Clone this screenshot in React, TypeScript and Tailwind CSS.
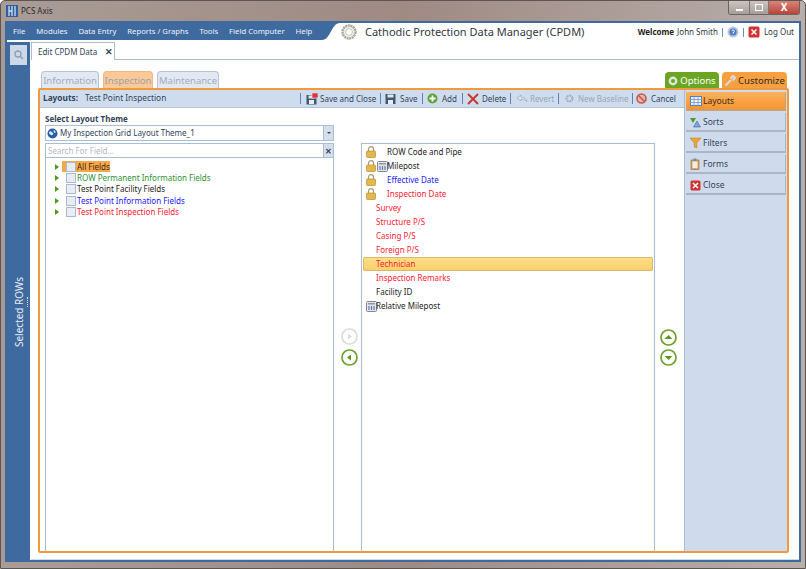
import React from "react";

const F = "font-['Roboto','Open_Sans',sans-serif]";

function Lock() {
  return (
    <svg width="10" height="12" viewBox="0 0 10 12" className="shrink-0">
      <path d="M2.5 5V3.2a2.5 2.5 0 0 1 5 0V5" fill="none" stroke="#a89a78" strokeWidth="1.2" />
      <rect x="0.5" y="5" width="9" height="6.5" rx="1" fill="#e2b84f" stroke="#b98f2e" strokeWidth="0.7" />
    </svg>
  );
}
function Calc() {
  return (
    <svg width="11" height="11" viewBox="0 0 11 11" className="shrink-0">
      <rect x="0.5" y="0.5" width="10" height="10" rx="1" fill="#e4e6ea" stroke="#7f8792" />
      <rect x="2" y="2" width="7" height="1.5" fill="#8f97a3" />
      <path d="M3 5v4M5.5 5v4M8 5v4" stroke="#5f79ad" strokeWidth="1.2" />
    </svg>
  );
}
function Disk({ red }: { red?: boolean }) {
  return (
    <svg width="12" height="12" viewBox="0 0 12 12" className="shrink-0">
      <rect x="0.5" y={red ? 2 : 1} width="10" height={red ? 9.5 : 10} fill="#44566e" />
      <rect x="3" y="7" width="5" height="4" fill="#e8edf3" />
      <rect x="2.5" y={red ? 2.5 : 1.5} width="6" height="3" fill="#dfe5ec" />
      {red && <rect x="6" y="0" width="6" height="5" fill="#d8343a" stroke="#fff" strokeWidth="0.5" />}
    </svg>
  );
}
function Sep() {
  return <span className="w-px h-[11px] bg-[#5f83ae] shrink-0" />;
}
function Tool({ icon, label, muted, w, tw }: { icon: React.ReactNode; label: string; muted?: boolean; w: string; tw?: string }) {
  return (
    <span className={`flex items-center ${w} ${muted ? "text-[#9aa6b4]" : "text-[#34445a]"}`}>
      <span className={`flex items-center shrink-0 ${tw ?? "w-[14px]"}`}>{icon}</span>
      <span className="whitespace-nowrap">{label}</span>
    </span>
  );
}
function Check() {
  return <span className="w-[10px] h-[10px] shrink-0 border border-[#a9b9cf] bg-[#e9edf3] mr-[1px]" />;
}
function TreeRow({ label, color, active }: { label: string; color: string; active?: boolean }) {
  return (
    <div className="h-[11.3px] flex items-center relative pl-[9px]">
      <svg width="4" height="6" viewBox="0 0 4 6" className="shrink-0 mr-[7px]"><path d="M0 0l4 3-4 3z" fill="#4d9a1e" /></svg>
      {active && <span className="absolute left-[16px] top-0 w-[48px] h-[11px] bg-[#f7a84a]" />}
      <span className="relative flex items-center">
        <Check />
        <span className={`whitespace-nowrap ${color}`}>{label}</span>
      </span>
    </div>
  );
}
function FieldRow({ label, color, lock, calc, active }: { label: string; color: string; lock?: boolean; calc?: boolean; active?: boolean }) {
  return (
    <div className={`h-[14px] flex items-center pl-[3px] mx-px rounded-[2px] ${active ? "bg-gradient-to-b from-[#fde08a] to-[#fbcf6a] shadow-[inset_0_0_0_1px_#dcb868]" : ""}`}>
      <span className="w-[10px] shrink-0 flex items-center">{lock ? <Lock /> : calc ? <Calc /> : null}</span>
      {lock && <span className="w-[11px] shrink-0 flex items-center pl-[1px]">{calc && <Calc />}</span>}
      <span className={`whitespace-nowrap ${color}`}>{label}</span>
    </div>
  );
}
function Round({ d, on }: { d: string; on: boolean }) {
  return (
    <svg width="17" height="17" viewBox="0 0 17 17">
      <circle cx="8.5" cy="8.5" r="7.5" fill="#fff" stroke={on ? "#6ea12c" : "#dcdcdc"} strokeWidth="1.7" />
      <path d={d} fill={on ? "#5f9424" : "#dcdcdc"} />
    </svg>
  );
}
function NavBtn({ icon, label, active }: { icon: React.ReactNode; label: string; active?: boolean }) {
  return (
    <div className={`h-[19px] flex items-center pl-[4px] pt-px border-b-2 border-r ${active ? "bg-gradient-to-b from-[#f9b25c] to-[#f7942e] border-[#c9a070] text-[#3b2c1a]" : "bg-[#cfdbed] border-[#a9b6c7] text-[#34445a]"}`}>
      <span className="w-[13px] shrink-0 flex items-center">{icon}</span>
      <span>{label}</span>
    </div>
  );
}

export default function App() {
  return (
    <div className={`w-[806px] h-[569px] flex flex-col overflow-hidden text-[8px] leading-none whitespace-nowrap rounded-t-[5px] border border-[#5c5552] bg-gradient-to-r from-[#a99c96] via-[#9f8a84] to-[#b8aeaa] ${F}`}>
      {/* Title bar */}
      <div className="h-[20px] shrink-0 flex items-start relative">
        <div className="flex items-center pl-[5px] pt-[4px] text-[#2c2a2a]">
          <svg width="12" height="12" viewBox="0 0 12 12" className="mr-[3px]">
            <rect width="12" height="12" fill="#2f5f9e" />
            <path d="M3 1v10M6 1v10M9 1v10" stroke="#cfe0f2" strokeWidth="1.3" />
            <path d="M3 6h3" stroke="#cfe0f2" strokeWidth="1.3" />
          </svg>
          <span>PCS Axis</span>
        </div>
        <div className="ml-auto mr-[5px] -mt-px w-[72px] h-[15px] flex border border-[#6b6460] border-t-0 rounded-b-[3px] overflow-hidden">
          <span className="w-[21px] flex items-end justify-center pb-[3px] bg-gradient-to-b from-[#cfc8c4] to-[#a59d99] border-r border-[#7c7470]"><span className="w-[7px] h-[2px] bg-white" /></span>
          <span className="w-[19px] flex items-center justify-center bg-gradient-to-b from-[#cfc8c4] to-[#a59d99] border-r border-[#7c7470]"><span className="w-[8px] h-[7px] border border-white" /></span>
          <span className="flex-1 flex items-center justify-center bg-gradient-to-b from-[#d98a7e] to-[#b8433a] text-white text-[10px] font-bold">X</span>
        </div>
      </div>

      {/* Window body */}
      <div className="flex-1 mx-[4px] mb-[6px] flex flex-col min-h-0 bg-white border-2 border-[#3f6a9f]">
        {/* Header */}
        <div className="h-[17px] shrink-0 flex bg-white">
          <div className="w-[315px] shrink-0 flex items-center gap-[11px] pl-[6px] bg-[#3f6a9f] text-[#eef3f9] text-[7.7px]">
            <span>File</span><span>Modules</span><span>Data Entry</span><span>Reports / Graphs</span><span>Tools</span><span>Field Computer</span><span>Help</span>
          </div>
          <svg width="18" height="17" viewBox="0 0 18 17" className="shrink-0">
            <path d="M0 0H18C9 0 9 17 0 17Z" fill="#3f6a9f" />
          </svg>
          <span className="ml-px mr-[8px] flex items-center">
            <svg width="16" height="16" viewBox="0 0 16 16">
              <circle cx="8" cy="8" r="6.5" fill="#f1efe6" stroke="#a8a898" strokeWidth="2.4" strokeDasharray="2 0.6" />
              <circle cx="8" cy="8" r="3.4" fill="#fff" stroke="#c4c4b6" />
            </svg>
          </span>
          <span className="text-[11px] text-[#33383f] flex items-center">Cathodic Protection Data Manager (CPDM)</span>
          <div className="ml-auto flex items-center pr-[5px] pt-[1px] text-[#2c3644]">
            <b className="text-[#1d1d1d] mr-[3px]">Welcome</b>
            <span>John Smith</span>
            <span className="w-px h-[9px] bg-[#6f8fb5] mx-[4px]" />
            <svg width="12" height="12" viewBox="0 0 12 12"><circle cx="6" cy="6" r="5.5" fill="#bcc9dc" /><circle cx="6" cy="6" r="3.6" fill="#4d7ec4" /><path d="M4.8 5a1.3 1.3 0 1 1 1.3 1.6V7.6" fill="none" stroke="#fff" /></svg>
            <span className="w-px h-[9px] bg-[#6f8fb5] mx-[4px]" />
            <svg width="12" height="12" viewBox="0 0 12 12" className="mr-[4px]"><rect x="0.5" y="0.5" width="11" height="11" rx="1.5" fill="#cf3433" /><path d="M3.5 3.5l5 5M8.5 3.5l-5 5" stroke="#fff" strokeWidth="1.5" /></svg>
            <span>Log Out</span>
          </div>
        </div>

        <div className="flex-1 flex min-h-0">
          {/* Left sidebar */}
          <div className="w-[23px] shrink-0 flex flex-col items-center bg-[#3f6a9f] border-t-2 border-white relative">
            <div className="w-[17px] h-[20px] mt-[3px] bg-[#cdd9e8] flex items-center justify-center">
              <svg width="10" height="10" viewBox="0 0 10 10"><circle cx="4" cy="4" r="3" fill="none" stroke="#8da0b6" strokeWidth="1.4" /><path d="M6.2 6.2L9 9" stroke="#8da0b6" strokeWidth="1.6" /></svg>
            </div>
            <div className="flex-1 flex items-center justify-center">
              <span className="[writing-mode:vertical-rl] rotate-180 text-[#e6edf6] text-[10px]">Selected ROWs</span>
            </div>
            <span className="absolute left-[20px] top-[255px] w-px h-[10px] border-l border-dotted border-[#dbe4f0]" />
          </div>

          {/* Main */}
          <div className="flex-1 min-w-0 flex flex-col pl-px">
            {/* doc tab strip */}
            <div className="h-[19px] mt-[1px] shrink-0 flex items-end border-b border-[#a9bdd6]">
              <div className="w-[84px] h-[18px] -mb-px flex items-center pl-[6px] bg-white border border-b-0 border-[#a9bdd6] text-[#34445a]">
                Edit CPDM Data
                <span className="ml-[8px] text-[#33475f] text-[9px] font-bold">✕</span>
              </div>
            </div>

            <div className="flex-1 min-h-0 flex flex-col pl-[7px] pr-[10px] pt-[11px] pb-[6px] border-b border-[#cfdbe9]">
              {/* Tabs row */}
              <div className="h-[18px] shrink-0 flex items-end -mb-px pl-[3px] pr-[2px] text-[9.5px]">
                <span className="w-[58px] h-[18px] rounded-t-[4px] border border-b-0 border-[#b4c4da] bg-[#e3e9f2] text-[#a2acb9] flex items-center justify-center">Information</span>
                <span className="ml-[4px] w-[50px] h-[18px] rounded-t-[4px] border border-b-0 border-[#f2b884] bg-[#fbc898] text-[#9aa3ad] flex items-center justify-center">Inspection</span>
                <span className="ml-[4px] w-[62px] h-[18px] rounded-t-[4px] border border-b-0 border-[#b4c4da] bg-[#e3e9f2] text-[#a2acb9] flex items-center justify-center">Maintenance</span>
                <span className="ml-auto w-[54px] h-[17px] rounded-t-[4px] bg-[#6aa622] text-white flex items-center justify-center gap-[2px]">
                  <svg width="10" height="10" viewBox="0 0 10 10"><circle cx="5" cy="5" r="3.2" fill="none" stroke="#dfe6da" strokeWidth="2.4" /></svg>Options
                </span>
                <span className="ml-[3px] w-[65px] h-[17px] rounded-t-[4px] bg-[#f7a040] text-[#2f2a22] flex items-center justify-center gap-[2px]">
                  <svg width="12" height="12" viewBox="0 0 12 12"><path d="M1.5 10.5L7 5M6.5 3.5L9 1l2 2-2.5 2.5" fill="none" stroke="#d8dde3" strokeWidth="2" /></svg>Customize
                </span>
              </div>

              {/* Panel */}
              <div className="flex-1 min-h-0 flex border-2 border-[#ef9a3e] rounded-[2px]">
                <div className="flex-1 min-w-0 flex flex-col">
                  {/* Toolbar */}
                  <div className="h-[18px] shrink-0 flex items-center pl-[3px] bg-[#cfdcee] border-b border-[#b4c4da] text-[#34445a]">
                    <b className="w-[42px] text-[8.3px]">Layouts:</b>
                    <span className="w-[215px] text-[8.3px]">Test Point Inspection</span>
                    <Sep />
                    <span className="w-[5px]" /><Tool icon={<Disk red />} label="Save and Close" w="w-[74px]" />
                    <Sep />
                    <span className="w-[4px]" /><Tool icon={<Disk />} label="Save" w="w-[37px]" tw="w-[15px]" />
                    <Sep />
                    <span className="w-[4px]" /><Tool icon={<svg width="11" height="11" viewBox="0 0 11 11"><circle cx="5.5" cy="5.5" r="5" fill="#5aa537" /><path d="M5.5 2.5v6M2.5 5.5h6" stroke="#fff" strokeWidth="1.8" /></svg>} label="Add" w="w-[35px]" tw="w-[15px]" />
                    <Sep />
                    <span className="w-[4px]" /><Tool icon={<svg width="12" height="12" viewBox="0 0 12 12"><path d="M1 1l10 10M11 1L1 11" stroke="#c8382e" strokeWidth="2" /></svg>} label="Delete" w="w-[43px]" tw="w-[15px]" />
                    <Sep />
                    <span className="w-[5px]" /><Tool muted icon={<svg width="12" height="10" viewBox="0 0 12 10"><path d="M5 1L1 4l4 3V5c3 0 5 1 6 3-.5-3-2.5-5-6-5z" fill="#e3e7ec" stroke="#9aa6b4" strokeWidth="0.7" /></svg>} label="Revert" w="w-[42px]" tw="w-[14px]" />
                    <Sep />
                    <span className="w-[5px]" /><Tool muted icon={<svg width="11" height="11" viewBox="0 0 11 11"><circle cx="5.5" cy="5.5" r="3" fill="none" stroke="#a4aebb" strokeWidth="2" strokeDasharray="2 0.7" /></svg>} label="New Baseline" w="w-[68px]" />
                    <Sep />
                    <span className="w-[3px]" /><Tool icon={<svg width="11" height="11" viewBox="0 0 11 11"><circle cx="5.5" cy="5.5" r="4.5" fill="#e8b6b0" stroke="#c9564c" strokeWidth="1.6" /><path d="M2.5 2.5l6 6" stroke="#c9564c" strokeWidth="1.6" /></svg>} label="Cancel" w="w-[40px]" tw="w-[15px]" />
                  </div>

                  {/* Body */}
                  <div className="flex-1 min-h-0 flex bg-white pl-[5px]">
                    <div className="w-[289px] shrink-0 flex flex-col pt-[5px]">
                      <div className="h-[12px] flex items-center font-bold text-[#34445a]">Select Layout Theme</div>
                      <div className="h-[16px] flex items-center border border-[#a9bdd6] text-[#34445a]">
                        <svg width="11" height="11" viewBox="0 0 11 11" className="mx-[1px]"><circle cx="5.5" cy="5.5" r="5" fill="#2a5ea8" /><path d="M2 4c2-2 3 0 4 1s-1 3-2 2-2-1-2-3zM7 2c2 1 2 3 1 3S6 3 7 2z" fill="#dbe7f6" /></svg>
                        <span className="ml-[1px]">My Inspection Grid Layout Theme_1</span>
                        <span className="ml-auto w-[10px] h-full bg-[#d5dfec] border-l border-[#a9bdd6] flex items-center justify-center"><span className="border-x-[2px] border-x-transparent border-t-[2px] border-t-[#34445a]" /></span>
                      </div>
                      <div className="mt-[2px] flex-1 min-h-0 border border-b-0 border-[#a9bdd6] flex flex-col">
                        <div className="h-[14px] shrink-0 flex items-center border-b border-[#a9bdd6] text-[#b4b9c0] pl-[1px]">
                          <span className="pl-[1px]">Search For Field...</span>
                          <span className="ml-auto w-[10px] h-full bg-[#d5dfec] border-l border-[#a9bdd6] flex items-center justify-center text-[#34445a] text-[8px] font-bold">✕</span>
                        </div>
                        <div className="pt-[3px]">
                          <TreeRow label="All Fields" color="text-[#3a2a10]" active />
                          <TreeRow label="ROW Permanent Information Fields" color="text-[#2e9133]" />
                          <TreeRow label="Test Point Facility Fields" color="text-[#1c1c1c]" />
                          <TreeRow label="Test Point Information Fields" color="text-[#2020ff]" />
                          <TreeRow label="Test Point Inspection Fields" color="text-[#ff2030]" />
                        </div>
                      </div>
                    </div>
                    <div className="w-[27px] shrink-0 pt-[34px] pl-[3px] flex flex-col items-center justify-center gap-[4px]">
                      <Round on={false} d="M7 5.5l4 3-4 3z" />
                      <Round on d="M10 5.5l-4 3 4 3z" />
                    </div>
                    <div className="w-[294px] shrink-0 pt-[35px] flex flex-col">
                      <div className="flex-1 min-h-0 border border-b-0 border-[#a9bdd6] pt-px">
                        <FieldRow label="ROW Code and Pipe" color="text-[#1c1c1c]" lock />
                        <FieldRow label="Milepost" color="text-[#1c1c1c]" lock calc />
                        <FieldRow label="Effective Date" color="text-[#2020ff]" lock />
                        <FieldRow label="Inspection Date" color="text-[#ff2030]" lock />
                        <FieldRow label="Survey" color="text-[#ff2030]" />
                        <FieldRow label="Structure P/S" color="text-[#ff2030]" />
                        <FieldRow label="Casing P/S" color="text-[#ff2030]" />
                        <FieldRow label="Foreign P/S" color="text-[#ff2030]" />
                        <FieldRow label="Technician" color="text-[#ff2030]" active />
                        <FieldRow label="Inspection Remarks" color="text-[#ff2030]" />
                        <FieldRow label="Facility ID" color="text-[#1c1c1c]" />
                        <FieldRow label="Relative Milepost" color="text-[#1c1c1c]" calc />
                      </div>
                    </div>
                    <div className="flex-1 pt-[35px] pr-[3px] flex flex-col items-center justify-center gap-[3px]">
                      <Round on d="M8.5 6l4 4h-8z" />
                      <Round on d="M8.5 11l4-4h-8z" />
                    </div>
                  </div>
                </div>

                {/* Right nav */}
                <div className="w-[103px] shrink-0 flex flex-col gap-[2px] bg-[#cfdbed] border-l border-[#a9bdd6] pl-[1px] pr-[1px] pt-[2px] text-[8.5px]">
                  <NavBtn active label="Layouts" icon={<svg width="12" height="10" viewBox="0 0 12 10"><rect x="0.5" y="0.5" width="11" height="9" fill="#eef3fb" stroke="#4f7fc0" /><path d="M0 3.5h12M0 6.5h12M4 0v10M8 0v10" stroke="#6d97cf" strokeWidth="0.8" /></svg>} />
                  <NavBtn label="Sorts" icon={<svg width="11" height="11" viewBox="0 0 11 11"><path d="M0 1h6L3 6z" fill="#4c9a33" /><path d="M7 4l3.5 6h-7z" fill="#7ea3d6" stroke="#3d6aa8" strokeWidth="0.6" /></svg>} />
                  <NavBtn label="Filters" icon={<svg width="11" height="12" viewBox="0 0 11 12"><path d="M0 1h11L6.8 6v5L4.2 10V6z" fill="#e9a43c" stroke="#b87a1c" strokeWidth="0.5" /></svg>} />
                  <NavBtn label="Forms" icon={<svg width="10" height="12" viewBox="0 0 10 12"><rect x="1" y="2" width="8" height="9.5" fill="#d9a468" stroke="#8f6a3c" strokeWidth="0.6" /><rect x="2.5" y="3.5" width="5" height="6.5" fill="#f3eee2" /><rect x="3.5" y="0.5" width="3" height="2.5" fill="#7f8994" /></svg>} />
                  <NavBtn label="Close" icon={<svg width="11" height="11" viewBox="0 0 11 11"><rect x="0.5" y="0.5" width="10" height="10" rx="1.5" fill="#cf3433" /><path d="M3 3l5 5M8 3l-5 5" stroke="#fff" strokeWidth="1.5" /></svg>} />
                </div>
              </div>
            </div>
          </div>
        </div>
      </div>
    </div>
  );
}
